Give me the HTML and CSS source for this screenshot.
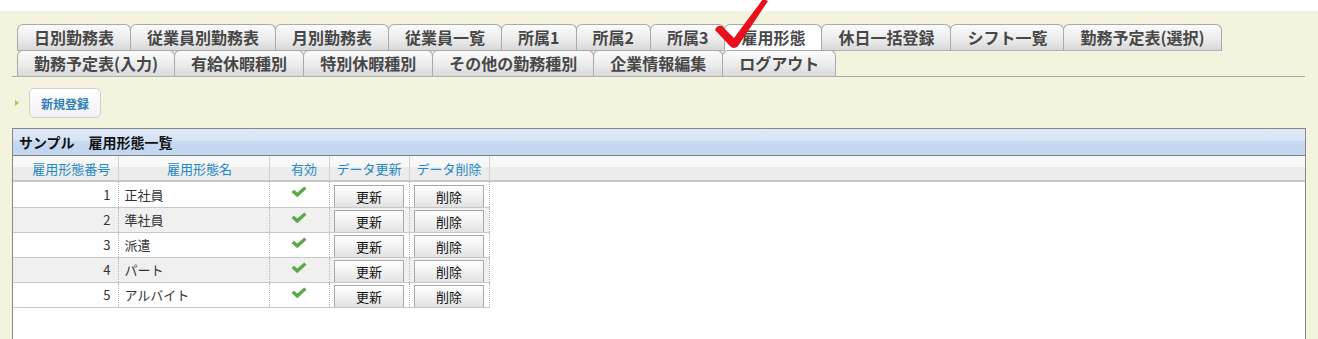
FILE: index.html
```html
<!DOCTYPE html>
<html>
  <head>
    <title>雇用形態一覧</title>
    <link rel="stylesheet" href="styles.css">
  </head>
  <body>
    <div class="topbar"></div>
    <div class="main">
      <div class="tabs">
        <a href="#" class="tab">日別勤務表</a>
        <a href="#" class="tab">従業員別勤務表</a>
        <a href="#" class="tab">月別勤務表</a>
        <a href="#" class="tab">従業員一覧</a>
        <a href="#" class="tab">所属1</a>
        <a href="#" class="tab">所属2</a>
        <a href="#" class="tab">所属3</a>
        <a href="#" class="tab active">雇用形態</a>
        <a href="#" class="tab">休日一括登録</a>
        <a href="#" class="tab">シフト一覧</a>
        <a href="#" class="tab">勤務予定表(選択)</a>
        <a href="#" class="tab">勤務予定表(入力)</a>
        <a href="#" class="tab">有給休暇種別</a>
        <a href="#" class="tab">特別休暇種別</a>
        <a href="#" class="tab">その他の勤務種別</a>
        <a href="#" class="tab">企業情報編集</a>
        <a href="#" class="tab">ログアウト</a>
        <svg class="redcheck" width="64" height="50" viewBox="0 0 64 50">
          <path d="M7 30 Q9 25 14 26 L26 38 L55 -1 L60 1 L30 46 Q26 50 22 46 Z" fill="#e8101c"/>
        </svg>
      </div>

      <div class="actions">
        <span class="arrow"></span>
        <button class="newBtn">新規登録</button>
      </div>

      <div class="panel">
        <div class="panelTitle">サンプル　雇用形態一覧</div>
        <table class="gridHead">
          <tr>
            <th class="c1">雇用形態番号</th>
            <th class="c2">雇用形態名</th>
            <th class="c3">有効</th>
            <th class="c4">データ更新</th>
            <th class="c5">データ削除</th>
            <th></th>
          </tr>
        </table>
        <table class="gridBody">
          <tr>
            <td class="c1 num">1</td><td class="c2">正社員</td>
            <td class="c3"><svg class="ok" width="16" height="12" viewBox="0 0 16 12"><path d="M0.5 6 L3 3.8 L6.3 6.6 L13.3 0.5 L15.5 2.7 L6.3 11.3 Z" fill="#59a948"/></svg></td>
            <td class="c4"><button class="cellBtn">更新</button></td><td class="c5"><button class="cellBtn">削除</button></td>
          </tr>
          <tr class="alt">
            <td class="c1 num">2</td><td class="c2">準社員</td>
            <td class="c3"><svg class="ok" width="16" height="12" viewBox="0 0 16 12"><path d="M0.5 6 L3 3.8 L6.3 6.6 L13.3 0.5 L15.5 2.7 L6.3 11.3 Z" fill="#59a948"/></svg></td>
            <td class="c4"><button class="cellBtn">更新</button></td><td class="c5"><button class="cellBtn">削除</button></td>
          </tr>
          <tr>
            <td class="c1 num">3</td><td class="c2">派遣</td>
            <td class="c3"><svg class="ok" width="16" height="12" viewBox="0 0 16 12"><path d="M0.5 6 L3 3.8 L6.3 6.6 L13.3 0.5 L15.5 2.7 L6.3 11.3 Z" fill="#59a948"/></svg></td>
            <td class="c4"><button class="cellBtn">更新</button></td><td class="c5"><button class="cellBtn">削除</button></td>
          </tr>
          <tr class="alt">
            <td class="c1 num">4</td><td class="c2">パート</td>
            <td class="c3"><svg class="ok" width="16" height="12" viewBox="0 0 16 12"><path d="M0.5 6 L3 3.8 L6.3 6.6 L13.3 0.5 L15.5 2.7 L6.3 11.3 Z" fill="#59a948"/></svg></td>
            <td class="c4"><button class="cellBtn">更新</button></td><td class="c5"><button class="cellBtn">削除</button></td>
          </tr>
          <tr>
            <td class="c1 num">5</td><td class="c2">アルバイト</td>
            <td class="c3"><svg class="ok" width="16" height="12" viewBox="0 0 16 12"><path d="M0.5 6 L3 3.8 L6.3 6.6 L13.3 0.5 L15.5 2.7 L6.3 11.3 Z" fill="#59a948"/></svg></td>
            <td class="c4"><button class="cellBtn">更新</button></td><td class="c5"><button class="cellBtn">削除</button></td>
          </tr>
        </table>
        <div class="gridEmpty"></div>
      </div>
    </div>
  </body>
</html>
```

FILE: styles.css
```css
body {
  margin: 0;
  font-family: "Noto Sans CJK JP", "Noto Sans", sans-serif;
  background-color: #f4f3dd;
  overflow: hidden;
}

.topbar {
  height: 11px;
  background-color: #ffffff;
}

.main {
  background-color: #f4f3dd;
  padding: 13px 12px 0 12px;
}

.tabs {
  position: relative;
  display: flex;
  flex-wrap: wrap;
  padding-left: 5px;
  border-bottom: 1px solid #a9a9a9;
  width: 1288px;
}

.tab {
  display: block;
  height: 25px;
  line-height: 25px;
  padding: 0 16px 0 16px;
  margin-right: -1px;
  margin-bottom: -1px;
  border: 1px solid #a9a9a9;
  border-bottom: 1px solid #b0b0b0;
  border-radius: 6px 6px 0 0;
  background: linear-gradient(#fbfbfb, #ececec 55%, #d8d8d8);
  color: #474747;
  font-size: 16px;
  font-weight: bold;
  text-decoration: none;
}

.tab.active {
  background: #ffffff;
  border-bottom-color: #ffffff;
}

.redcheck {
  position: absolute;
  left: 696px;
  top: -24px;
}

.actions {
  display: flex;
  align-items: center;
  padding-top: 11px;
}

.arrow {
  width: 0;
  height: 0;
  border-top: 3px solid transparent;
  border-bottom: 3px solid transparent;
  border-left: 4px solid #9acd5a;
  margin: 0 10px 0 3px;
}

.newBtn {
  height: 30px;
  width: 72px;
  border: 1px solid #d0d0d0;
  border-radius: 5px;
  background: linear-gradient(#ffffff, #f1f1f1);
  color: #2f7fb8;
  font-family: "Noto Sans CJK JP", sans-serif;
  font-size: 12px;
  font-weight: bold;
  padding: 0;
}

.panel {
  margin-top: 10px;
  border: 1px solid #888888;
  border-bottom: none;
  background-color: #ffffff;
  width: 1292px;
}

.panelTitle {
  height: 26px;
  line-height: 26px;
  padding-left: 6px;
  background: linear-gradient(#dfeaf8, #d6e4f6 44%, #c6d9f1 46%, #c3d6f0);
  border-bottom: 1px solid #7f7f7f;
  font-size: 14px;
  font-weight: bold;
  color: #111111;
}

table {
  border-collapse: collapse;
  table-layout: fixed;
}

th, td {
  box-sizing: border-box;
}

.gridHead {
  width: 100%;
  background: linear-gradient(#f8f8f8 45%, #ececec 46%);
  border-bottom: 2px solid #c6c6c6;
}

.gridHead th {
  height: 25px;
  padding: 0;
  font-size: 13px;
  font-weight: normal;
  color: #2589c8;
  border-right: 1px solid #d2d2d2;
  text-align: center;
}

.gridHead th:last-child {
  border-right: none;
}

.c1 { width: 105px; }
.c2 { width: 151px; }
.c3 { width: 60px; }
.c4 { width: 80px; }
.c5 { width: 80px; }

.gridHead .c1 { padding-left: 12px; }
.gridHead .c2 { padding-left: 12px; }
.gridHead .c3 { padding-left: 10px; }

.gridBody {
  width: 476px;
}

.gridBody td {
  height: 25px;
  padding: 0 6px;
  font-size: 13px;
  color: #333333;
  border-bottom: 1px solid #c8c8c8;
  border-right: 1px dotted #b5b5b5;
  white-space: nowrap;
}

.gridBody tr.alt td {
  background-color: #f0f0f0;
}

.gridBody td.num {
  text-align: right;
  padding-right: 7px;
}

.gridBody td.c3,
.gridBody td.c4,
.gridBody td.c5 {
  text-align: center;
  padding: 0;
}

.gridBody td.c4,
.gridBody td.c5 {
  vertical-align: bottom;
}

.ok {
  display: block;
  margin: -4px auto 0 auto;
}

.cellBtn {
  display: block;
  margin: 0 auto;
  width: 70px;
  height: 22px;
  padding: 0;
  border: 1px solid #a8a8a8;
  border-bottom: none;
  background: linear-gradient(#ffffff, #f2f2f2 50%, #e2e2e2);
  font-family: "Noto Sans CJK JP", sans-serif;
  font-size: 13px;
  color: #111111;
}

.gridEmpty {
  height: 40px;
}
```
